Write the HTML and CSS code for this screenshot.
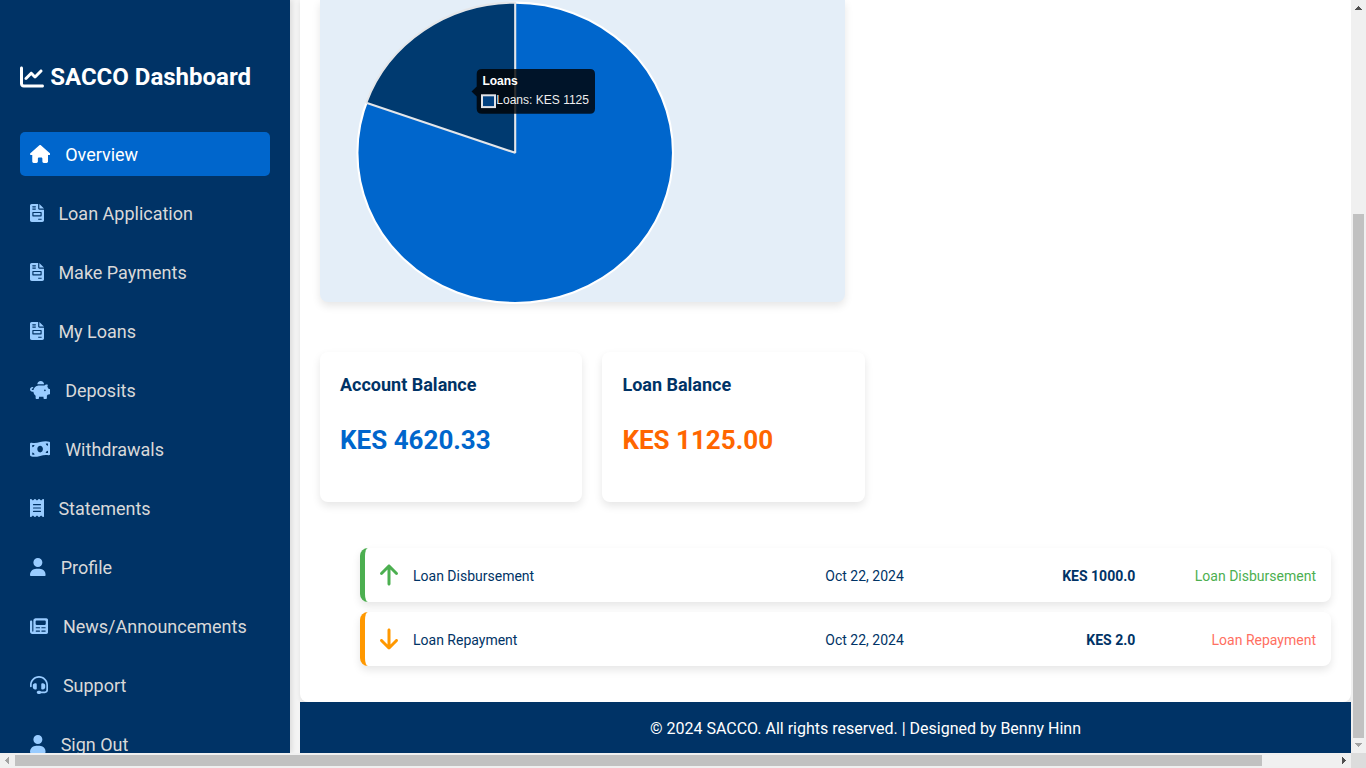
FILE: index.html
```html
<!DOCTYPE html>
<html lang="en">
<head>
<meta charset="utf-8">
<title>SACCO Dashboard</title>
<link rel="stylesheet" href="styles.css">
</head>
<body>
<svg width="0" height="0" class="defs">
  <symbol id="chart" viewBox="0 0 512 512"><path d="M64 64c0-17.7-14.3-32-32-32S0 46.3 0 64V400c0 44.2 35.8 80 80 80H480c17.7 0 32-14.3 32-32s-14.3-32-32-32H80c-8.8 0-16-7.2-16-16V64zm406.6 86.6c12.5-12.5 12.5-32.8 0-45.3s-32.8-12.5-45.3 0L320 210.7l-57.4-57.4c-12.5-12.5-32.8-12.5-45.3 0l-112 112c-12.5 12.5-12.5 32.8 0 45.3s32.8 12.5 45.3 0L240 221.3l57.4 57.4c12.5 12.5 32.8 12.5 45.3 0l128-128z"/></symbol>
  <symbol id="house" viewBox="0 0 576 512"><path d="M575.8 255.5c0 18-15 32.1-32 32.1h-32l.7 160.2c0 2.7-.2 5.4-.5 8.1V472c0 22.1-17.9 40-40 40H456c-1.1 0-2.2 0-3.3-.1c-1.4 .1-2.8 .1-4.2 .1H416 392c-22.1 0-40-17.9-40-40V448 384c0-17.7-14.3-32-32-32H256c-17.7 0-32 14.3-32 32v64 24c0 22.1-17.9 40-40 40H160 128.1c-1.5 0-3-.1-4.5-.2c-1.2 .1-2.4 .2-3.6 .2H104c-22.1 0-40-17.9-40-40V360c0-.9 0-1.9 .1-2.8V287.6H32c-18 0-32-14-32-32.1c0-9 3-17 10-24L266.4 8c7-7 15-8 22-8s15 2 21 7L564.8 231.5c8 7 12 15 11 24z"/></symbol>
  <symbol id="invoice" viewBox="0 0 384 512" preserveAspectRatio="none"><path d="M256 0v128h128L256 0zM288 256H96v64h192V256zM224 128L224 0H48C21.49 0 0 21.49 0 48v416C0 490.5 21.49 512 48 512h288c26.51 0 48-21.49 48-48V160h-127.1C238.3 160 224 145.7 224 128zM64 72C64 67.63 67.63 64 72 64h80C156.4 64 160 67.63 160 72v16C160 92.38 156.4 96 152 96h-80C67.63 96 64 92.38 64 88V72zM64 136C64 131.6 67.63 128 72 128h80C156.4 128 160 131.6 160 136v16C160 156.4 156.4 160 152 160h-80C67.63 160 64 156.4 64 152V136zM320 440c0 4.375-3.625 8-8 8h-80C227.6 448 224 444.4 224 440v-16c0-4.375 3.625-8 8-8h80c4.375 0 8 3.625 8 8V440zM320 240v96c0 8.875-7.125 16-16 16h-224C71.13 352 64 344.9 64 336v-96C64 231.1 71.13 224 80 224h224C312.9 224 320 231.1 320 240z"/></symbol>
  <symbol id="piggy" viewBox="0 0 576 512"><path d="M400 92L208 92C208 38 251 0 304 0s96 38 96 92zm-16 36c3.5 0 7 .1 10.4 .3c4.2 .3 8.4 .7 12.6 1.3C424.6 109.1 450.8 96 480 96h11.5c10.4 0 18 9.8 15.5 19.9l-13.8 55.2c15.8 14.8 28.7 32.8 37.5 52.9H544c17.7 0 32 14.3 32 32v96c0 17.7-14.3 32-32 32H512c-9.1 12.1-19.9 22.9-32 32v64c0 17.7-14.3 32-32 32H416c-17.7 0-32-14.3-32-32V448H256v32c0 17.7-14.3 32-32 32H192c-17.7 0-32-14.3-32-32V416c-34.9-26.2-58.7-66.3-63.2-112H68c-37.6 0-68-30.4-68-68s30.4-68 68-68h4c13.3 0 24 10.7 24 24s-10.7 24-24 24H68c-11 0-20 9-20 20s9 20 20 20H99.2c12.1-59.8 57.7-107.5 116.3-122.8c12.9-3.4 26.5-5.2 40.5-5.2H384zm64 136a24 24 0 1 0 -48 0 24 24 0 1 0 48 0z"/></symbol>
  <symbol id="money" viewBox="0 0 576 512"><path d="M0 112.5V422.3c0 18 10.1 35 27 41.3c87 32.5 174 10.3 261-11.9c79.8-20.3 159.6-40.7 239.3-18.9c23 6.3 48.7-9.5 48.7-33.4V89.7c0-18-10.1-35-27-41.3C462 15.9 375 38.1 288 60.3C208.2 80.6 128.4 100.9 48.7 79.1C25.6 72.8 0 88.6 0 112.5zM288 352c-44.2 0-80-43-80-96s35.8-96 80-96s80 43 80 96s-35.8 96-80 96zM64 352c35.3 0 64 28.7 64 64H64V352zm64-208c0 35.3-28.7 64-64 64V144h64zM512 304v64H448c0-35.3 28.7-64 64-64zM448 96h64v64c-35.3 0-64-28.7-64-64z"/></symbol>
  <symbol id="receipt" viewBox="0 0 384 512" preserveAspectRatio="none"><path d="M14 2.2C22.5-1.7 32.5-.3 39.6 5.8L80 40.4 120.4 5.8c9-7.7 22.3-7.7 31.2 0L192 40.4 232.4 5.8c9-7.7 22.3-7.7 31.2 0L304 40.4 344.4 5.8c7.1-6.1 17.1-7.5 25.6-3.6s14 12.4 14 21.8V488c0 9.4-5.5 17.9-14 21.8s-18.5 2.5-25.6-3.6L304 471.6l-40.4 34.6c-9 7.7-22.3 7.7-31.2 0L192 471.6l-40.4 34.6c-9 7.7-22.3 7.7-31.2 0L80 471.6 39.6 506.2c-7.1 6.1-17.1 7.5-25.6 3.6S0 497.4 0 488V24C0 14.6 5.5 6.1 14 2.2zM96 144c-8.8 0-16 7.2-16 16s7.2 16 16 16H288c8.8 0 16-7.2 16-16s-7.2-16-16-16H96zM80 352c0 8.8 7.2 16 16 16H288c8.8 0 16-7.2 16-16s-7.2-16-16-16H96c-8.8 0-16 7.2-16 16zM96 240c-8.8 0-16 7.2-16 16s7.2 16 16 16H288c8.8 0 16-7.2 16-16s-7.2-16-16-16H96z"/></symbol>
  <symbol id="user" viewBox="0 0 448 512"><path d="M224 256A128 128 0 1 0 224 0a128 128 0 1 0 0 256zm-45.7 48C79.8 304 0 383.8 0 482.3C0 498.7 13.3 512 29.7 512H418.3c16.4 0 29.7-13.3 29.7-29.7C448 383.8 368.2 304 269.7 304H178.3z"/></symbol>
  <symbol id="news" viewBox="0 0 512 512"><path d="M96 96c0-35.3 28.7-64 64-64H464c26 0 48 22 48 48V432c0 26-22 48-48 48H64c-35 0-64-29-64-64V128c0-17.7 14.3-32 32-32s32 14.3 32 32V400c0 8.8 7.2 16 16 16s16-7.2 16-16V96zm64 24v80c0 13.3 10.7 24 24 24H424c13.3 0 24-10.7 24-24V120c0-13.3-10.7-24-24-24H184c-13.3 0-24 10.7-24 24zm0 184c0 8.8 7.2 16 16 16h96c8.8 0 16-7.2 16-16s-7.2-16-16-16H176c-8.8 0-16 7.2-16 16zm160 0c0 8.8 7.2 16 16 16h96c8.8 0 16-7.2 16-16s-7.2-16-16-16H336c-8.8 0-16 7.2-16 16zM160 400c0 8.8 7.2 16 16 16h96c8.8 0 16-7.2 16-16s-7.2-16-16-16H176c-8.8 0-16 7.2-16 16zm160 0c0 8.8 7.2 16 16 16h96c8.8 0 16-7.2 16-16s-7.2-16-16-16H336c-8.8 0-16 7.2-16 16z"/></symbol>
  <symbol id="headset" viewBox="0 0 512 512"><path d="M256 48C141.1 48 48 141.1 48 256v40c0 13.3-10.7 24-24 24s-24-10.7-24-24V256C0 114.6 114.6 0 256 0S512 114.6 512 256V400.1c0 48.6-39.4 88-88.1 88L313.6 488c-8.3 14.3-23.8 24-41.6 24H240c-26.5 0-48-21.5-48-48s21.5-48 48-48h32c17.8 0 33.3 9.7 41.6 24l110.4 .1c22.1 0 40-17.9 40-40V256c0-114.9-93.1-208-208-208zM144 208h16c17.7 0 32 14.3 32 32V352c0 17.7-14.3 32-32 32H144c-35.3 0-64-28.7-64-64V272c0-35.3 28.7-64 64-64zm224 0c35.3 0 64 28.7 64 64v48c0 35.3-28.7 64-64 64H352c-17.7 0-32-14.3-32-32V240c0-17.7 14.3-32 32-32h16z"/></symbol>
  <symbol id="arrow" viewBox="0 0 384 512"><path d="M214.6 41.4c-12.5-12.5-32.8-12.5-45.3 0l-160 160c-12.5 12.5-12.5 32.8 0 45.3s32.8 12.5 45.3 0L160 141.2V448c0 17.7 14.3 32 32 32s32-14.3 32-32V141.2L329.4 246.6c12.5 12.5 32.8 12.5 45.3 0s12.5-32.8 0-45.3l-160-160z"/></symbol>
</svg>
<div class="window">
  <div class="viewport">
    <aside class="sidebar">
      <h2 class="brand"><svg class="brand-icon"><use href="#chart"/></svg>SACCO Dashboard</h2>
      <nav class="nav">
        <a class="nav-item active"><svg class="icon w576"><use href="#house"/></svg>Overview</a>
        <a class="nav-item"><svg class="icon w384"><use href="#invoice"/></svg>Loan Application</a>
        <a class="nav-item"><svg class="icon w384"><use href="#invoice"/></svg>Make Payments</a>
        <a class="nav-item"><svg class="icon w384"><use href="#invoice"/></svg>My Loans</a>
        <a class="nav-item"><svg class="icon w576"><use href="#piggy"/></svg>Deposits</a>
        <a class="nav-item"><svg class="icon w576"><use href="#money"/></svg>Withdrawals</a>
        <a class="nav-item"><svg class="icon w384"><use href="#receipt"/></svg>Statements</a>
        <a class="nav-item"><svg class="icon w448"><use href="#user"/></svg>Profile</a>
        <a class="nav-item"><svg class="icon w512"><use href="#news"/></svg>News/Announcements</a>
        <a class="nav-item"><svg class="icon w512"><use href="#headset"/></svg>Support</a>
        <a class="nav-item"><svg class="icon w448"><use href="#user"/></svg>Sign Out</a>
      </nav>
    </aside>
    <div class="page">
      <main class="content">
        <section class="chart-card">
          <svg class="pie" width="525" height="302" viewBox="320 0 525 302">
            <ellipse cx="515.2" cy="152.8" rx="157.8" ry="150.2" fill="#0066cc" stroke="#fff" stroke-width="2.1"/>
            <path d="M515.2 152.8L366.2 102.8A157.8 150.2 0 0 1 515.2 2.6Z" fill="#003a70" stroke="#e4e6e9" stroke-width="2.1" stroke-linejoin="bevel"/>
            <path d="M482 69H590Q595 69 595 74V108.7Q595 113.7 590 113.7H482Q476.7 113.7 476.7 108.7V96.5L471.5 91.5L476.7 86.5V74Q476.7 69 482 69Z" fill="#000" fill-opacity=".8"/>
            <text class="tip-title" x="482.4" y="85.2" textLength="35.4" lengthAdjust="spacingAndGlyphs">Loans</text>
            <rect x="482" y="95.3" width="13" height="11.8" fill="#004080" stroke="#e0e2e6" stroke-width="2"/>
            <text class="tip-body" x="496.3" y="104.3" textLength="92.7" lengthAdjust="spacingAndGlyphs">Loans: KES 1125</text>
          </svg>
        </section>
        <section class="balances">
          <article class="balance"><h3>Account Balance</h3><p>KES 4620.33</p></article>
          <article class="balance loan"><h3>Loan Balance</h3><p>KES 1125.00</p></article>
        </section>
        <ul class="transactions">
          <li class="row in"><svg class="row-icon"><use href="#arrow"/></svg><span>Loan Disbursement</span><span>Oct 22, 2024</span><b>KES 1000.0</b><span class="status">Loan Disbursement</span></li>
          <li class="row out"><svg class="row-icon"><use href="#arrow"/></svg><span>Loan Repayment</span><span>Oct 22, 2024</span><b>KES 2.0</b><span class="status">Loan Repayment</span></li>
        </ul>
      </main>
      <footer class="footer">© 2024 SACCO. All rights reserved. | Designed by Benny Hinn</footer>
    </div>
  </div>
  <div class="vbar">
    <svg width="15" height="15"><path d="M4 10V9H5V8H6V7H7V6H8V7H9V8H10V9H11V10Z" fill="#505050"/></svg>
    <div class="vtrack"><div class="vthumb"></div></div>
    <svg width="15" height="15"><path d="M4 5H11V6H10V7H9V8H8V9H7V8H6V7H5V6H4Z" fill="#a3a3a3"/></svg>
  </div>
  <div class="hbar">
    <svg width="15" height="15"><path d="M9 4V11H8V10H7V9H6V8H5V7H6V6H7V5H8V4Z" fill="#a3a3a3"/></svg>
    <div class="htrack"><div class="hthumb"></div></div>
    <svg width="15" height="15"><path d="M6 4H7V5H8V6H9V7H10V8H9V9H8V10H7V11H6Z" fill="#505050"/></svg>
  </div>
  <div class="corner"></div>
</div>
</body>
</html>
```
FILE: styles.css
```css
* { box-sizing: border-box; }
body {
  margin: 0;
  overflow: hidden;
  font-family: Roboto, sans-serif;
  color: #003366;
}
svg { display: block; fill: currentColor; flex: none; }
.defs { display: none; }
.window {
  display: grid;
  grid-template: 753px 15px / 1351px 15px;
  width: 1366px;
  height: 768px;
}
.viewport { display: flex; gap: 10px; overflow: hidden; background: #f4f4f4; }

.sidebar {
  width: 290px;
  height: 753px;
  padding: 62px 20px 0;
  background: #003366;
  color: #fff;
  box-shadow: 2px 0 5px rgba(0, 0, 0, .1);
}
.brand {
  display: flex;
  align-items: center;
  gap: 6.2px;
  height: 30px;
  margin: 0 0 40px;
  font-size: 24px;
  line-height: 30px;
  white-space: nowrap;
}
.brand-icon { width: 24px; height: 24px; }
.nav { display: flex; flex-direction: column; gap: 15px; }
.nav-item {
  display: flex;
  align-items: center;
  gap: 14.9px;
  flex: none;
  height: 44px;
  padding: 0 10px;
  border-radius: 5px;
  font-size: 18px;
  color: #d9d9d9;
}
.nav-item.active { background: #0066cc; color: #fff; }
.icon { height: 18px; color: #99ccff; }
.active .icon { color: #fff; }
.w384 { width: 14px; margin-right: -.5px; }
.w448 { width: 15.75px; }
.w512 { width: 18px; }
.w576 { width: 20.25px; }

.page { flex: 1; display: flex; flex-direction: column; }
.content {
  height: 702px;
  padding: 0 20px;
  background: #fff;
  border-radius: 0 0 8px 8px;
  box-shadow: 0 2px 5px rgba(0, 0, 0, .08);
}
.chart-card {
  width: 525px;
  height: 302px;
  margin-bottom: 50px;
  background: #e4eef8;
  border-radius: 0 0 8px 8px;
  box-shadow: 0 4px 8px rgba(0, 0, 0, .1);
}
.pie { overflow: visible; }
.tip-title, .tip-body { font-family: "Liberation Sans", Arial, sans-serif; font-size: 12px; fill: #fff; }
.tip-title { font-weight: bold; }
.tip-body { fill: #eee; }

.balances { display: grid; grid-template-columns: 262.4px 262.5px; gap: 20px; margin-bottom: 46px; }
.balance {
  height: 150px;
  padding: 20px;
  background: #fff;
  border-radius: 8px;
  box-shadow: 0 4px 8px rgba(0, 0, 0, .1);
}
.balance h3 { margin: 0 0 29px; font-size: 18px; line-height: 25px; }
.balance p { margin: 0; font-size: 26px; line-height: 28px; font-weight: bold; color: #0066cc; }
.balance.loan p { color: #ff6600; }

.transactions { display: flex; flex-direction: column; gap: 10px; margin: 0; padding: 0 0 0 40px; list-style: none; }
.row {
  display: grid;
  grid-template-columns: 18px 397.3px 130px 165px 165.7px;
  column-gap: 15px;
  align-items: center;
  height: 54px;
  padding: 1px 15px 0;
  border-left: 5px solid #4caf50;
  border-radius: 8px;
  background: #fff;
  box-shadow: 0 4px 8px rgba(0, 0, 0, .1);
  font-size: 14px;
}
.row b, .status { text-align: right; }
.row-icon { width: 18px; height: 24px; margin-top: -2px; color: #4caf50; }
.status { color: #4caf50; }
.out { border-left-color: #ff9800; }
.out .row-icon { color: #ff9800; transform: scaleY(-1); }
.out .status { color: #ff6f61; }

.footer {
  position: relative;
  height: 51px;
  padding-left: 80px;
  background: #003366;
  color: #fff;
  font-size: 16px;
  line-height: 53px;
  text-align: center;
}

.vbar { display: flex; flex-direction: column; background: #f0f0f0; }
.vtrack { flex: 1; padding: 199px 2px 0; }
.vthumb { height: 524px; background: #c1c1c1; }
.hbar { display: flex; background: #f0f0f0; }
.htrack { flex: 1; padding: 2px 0; }
.hthumb { width: 1247px; height: 11px; background: #c1c1c1; }
.corner { background: #dcdcdc; }
```
